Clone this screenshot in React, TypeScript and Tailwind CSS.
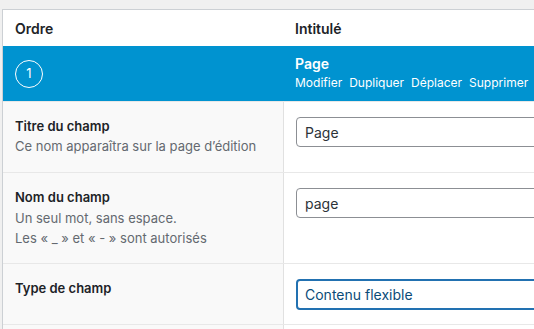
import React from 'react'

const font = { fontFamily: 'Inter, "Noto Sans", sans-serif' }

function FieldRow({
  label,
  description,
  children,
  leftPad = 'pb-[15px]',
}: {
  label: string
  description?: React.ReactNode
  children: React.ReactNode
  leftPad?: string
}) {
  return (
    <div className="flex border-t border-[#e8e8e8]">
      <div className={`w-[281px] shrink-0 bg-[#f9f9f9] border-r border-[#e1e1e1] px-3 pt-[15px] ${leftPad}`}>
        <p className="text-[13px] leading-[18px] font-semibold text-[#1d2327]">{label}</p>
        {description && (
          <div className="mt-[2px] text-[13px] leading-[18px] text-[#646970]">{description}</div>
        )}
      </div>
      <div className="flex-1 px-3 pt-[15px] pb-[14px] bg-white">{children}</div>
    </div>
  )
}

export default function App() {
  const links = ['Modifier', 'Dupliquer', 'Déplacer', 'Supprimer']

  return (
    <div className="w-[534px] h-[329px] overflow-hidden bg-[#f0f0f0] pt-[9px] pl-[2px]" style={font}>
      <div className="w-[640px] bg-white border-l border-t border-[#ccd0d4]">
        {/* Column headings */}
        <div className="flex h-[36px] items-center text-[14px] font-semibold text-[#1d2327]">
          <div className="w-[281px] shrink-0 px-3">Ordre</div>
          <div className="flex-1 px-[11px]">Intitulé</div>
        </div>

        {/* Open field handle */}
        <div className="flex bg-[#0093d0] text-white h-[55px]">
          <div className="w-[281px] shrink-0 px-3 flex items-center">
            <span className="w-[28px] h-[28px] rounded-full border border-white flex items-center justify-center text-[13px]">
              1
            </span>
          </div>
          <div className="flex-1 px-[11px] pt-[8px]">
            <p className="text-[14px] leading-[20px] font-semibold">Page</p>
            <div className="flex gap-[7px] text-[12px] leading-[18px]">
              {links.map((l) => (
                <span key={l}>{l}</span>
              ))}
            </div>
          </div>
        </div>

        <FieldRow label="Titre du champ" description="Ce nom apparaîtra sur la page d’édition" leftPad="pb-[17px]">
          <div className="h-[30px] rounded-[4px] border border-[#8c8f94] px-2 flex items-center text-[14px] text-[#2c3338]">
            Page
          </div>
        </FieldRow>

        <FieldRow
          label="Nom du champ"
          description={
            <>
              <p className="leading-[20px]">Un seul mot, sans espace.</p>
              <p className="leading-[20px]">Les « _ » et « - » sont autorisés</p>
            </>
          }
        >
          <div className="h-[30px] rounded-[4px] border border-[#8c8f94] px-2 flex items-center text-[14px] text-[#2c3338]">
            page
          </div>
        </FieldRow>

        <FieldRow label="Type de champ">
          <div className="h-[31px] rounded-[4px] border-2 border-[#2271b1] px-[7px] flex items-center text-[14px] text-[#0a4b78]">
            Contenu flexible
          </div>
        </FieldRow>

        <div className="flex border-t border-[#e8e8e8] h-[20px]">
          <div className="w-[281px] shrink-0 bg-[#f9f9f9] border-r border-[#e1e1e1]" />
          <div className="flex-1" />
        </div>
      </div>
    </div>
  )
}
